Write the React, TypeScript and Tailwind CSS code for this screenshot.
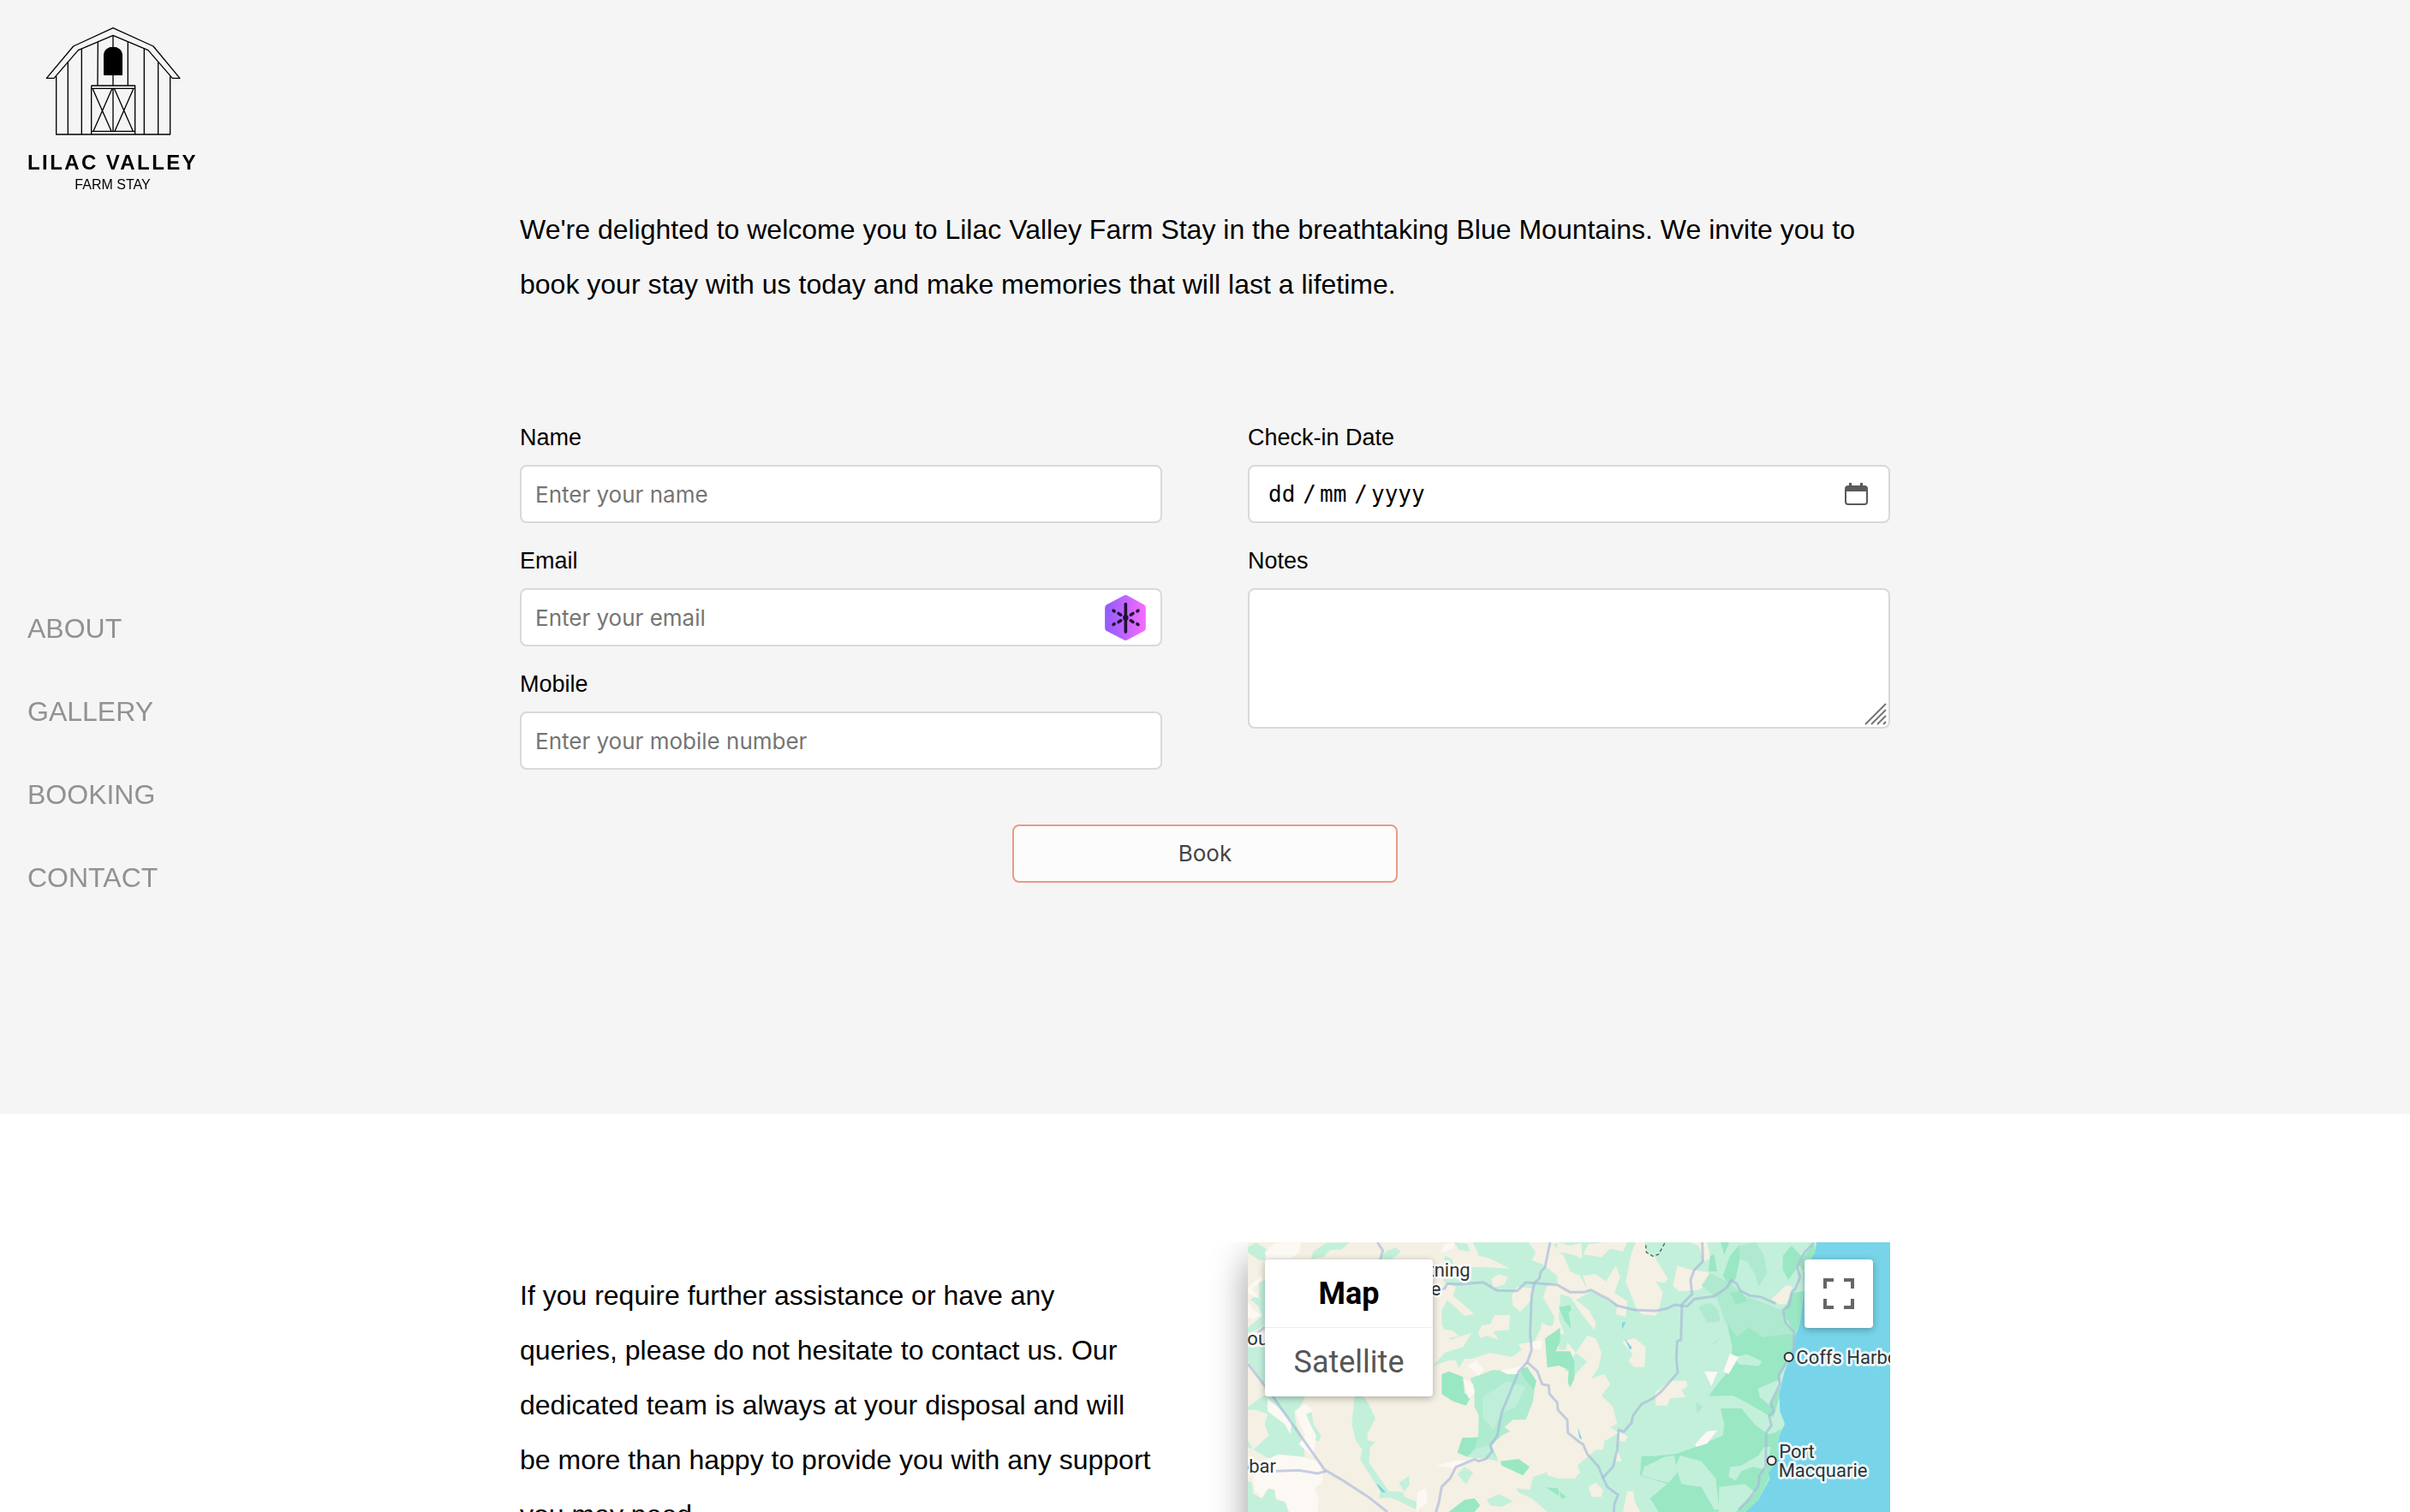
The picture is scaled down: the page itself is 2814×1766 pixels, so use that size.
import React from "react";

const FIELD = "h-[68px] w-full rounded-lg border-2 border-[#d9d9d9] bg-white text-black outline-none";

function Barn() {
  return (
    <svg viewBox="156 90 480 390" className="h-[130px] w-[160px]" fill="none" stroke="#000" strokeWidth="4" strokeLinejoin="round" aria-hidden="true">
      <path d="M163 274 257 162 396 98 537 162 630 274H604L519 176 396 124 274 176 189 274Z" />
      <path d="M197 266V471H596V266M238 217V471M286 171V471M505 171V471M554 217V471M343 147 342 300M448 147V300M396 124V170M396 260V300" />
      <path d="M320 300H473V471M320 300V471M320 310H473M320 460H473M396 310V460M324 310 390 460M393 310 327 460M400 310 466 460M468 310 402 460" />
      <path d="M365 262V195C365 175 380 166 396 166S427 175 427 195V262Z" fill="#000" />
    </svg>
  );
}

function HexBadge() {
  return (
    <svg viewBox="84 98 150 166" className="h-[55px] w-[50px]" aria-hidden="true">
      <defs>
        <linearGradient id="hex" x1="0" x2="1" y1="0" y2="0">
          <stop offset="0" stopColor="#8f5cff" />
          <stop offset="1" stopColor="#f76cff" />
        </linearGradient>
      </defs>
      <path d="M153 103Q160 99 167 103L225 135Q231 139 231 146V217Q231 224 225 228L167 259Q160 263 153 259L93 228Q87 224 87 217V146Q87 139 93 135Z" fill="url(#hex)" />
      <g stroke="#1f1235" strokeWidth="11" strokeLinecap="round">
        <path d="M160 133V231M117 156 120 158M135 166 143 171M178 191 186 196M201 203 204 205M204 156 201 158M186 166 178 171M143 191 135 196M120 203 117 205" />
      </g>
      <circle cx="160" cy="181" r="10" fill="#1f1235" />
    </svg>
  );
}

function CalendarIcon() {
  return (
    <svg viewBox="0 0 27 26" className="h-[26px] w-[27px]" aria-hidden="true">
      <path fillRule="evenodd" fill="#5a5a5a" d="M5 0H8V3H18V0H21V3H23Q27 3 27 7V22Q27 26 23 26H4Q0 26 0 22V7Q0 3 4 3H5ZM2 10V22Q2 24 4 24H23Q25 24 25 22V10Z" />
    </svg>
  );
}

const LIGHT_WEST = [
  "111,80 140,65 175,85 171,125 150,125 111,98",
  "333,122 340,95 385,65 468,63 440,88 400,90 375,115",
  "570,122 598,92 630,82 648,95 615,122",
  "150,205 171,195 171,350 140,372 111,380 111,362 160,322 150,290 120,262 150,250",
  "111,430 171,430 171,565 111,478",
  "111,640 165,600 312,603 300,630 275,660 280,700 300,750 312,815 215,805 210,835 130,790 111,780 111,755 130,790 185,740 170,700 180,665 140,650 111,650",
  "318,652 335,655 340,700 368,740 360,760 345,755 330,710 315,690",
  "485,603 515,603 535,630 558,680 530,735 530,757 558,762 540,780 535,835 605,935 660,938 640,905 675,882 678,912 655,940 660,955 708,975 700,1000 640,970 610,958 570,960 575,935 540,880 505,825 512,790 490,760 475,700 480,650",
  "111,900 125,905 130,945 160,960 185,925 205,930 210,965 250,975 255,1008 111,1008",
  "835,63 880,68 890,95 850,90",
  "900,63 1095,63 1120,100 1105,125 1145,140 1200,185 1198,205 1160,215 1145,255 1185,325 1180,355 1140,360 1115,410 1060,420 1070,440 1035,465 960,450 900,470 870,472 850,505 840,478 820,475 760,497 800,450 865,430 895,380 820,405 790,350 790,300 810,265 870,320 905,315 830,250 840,220 795,200 800,110 825,120 835,150 935,150 1030,155 960,120 920,110",
  "845,875 870,850 900,870 875,912",
  "948,965 990,945 1040,970 1000,990 960,985",
  "1050,925 1100,930 1110,885 1160,868 1260,900 1260,1008 1160,1008 1105,960 1060,940",
  "1180,70 1210,63 1260,90 1215,85 1220,120 1200,95",
];

const MID_WEST = [
  "890,540 970,510 1060,515 1085,500 1120,545 1110,620 1085,685 1040,685 1010,710 1030,725 1000,740 965,775 985,820 945,818 850,800 865,750 918,745 920,670 905,640 905,580",
];

const INNER_WEST = ["935,605 1020,550 1085,570 1050,640 1000,660 972,720 935,680", "905,790 960,770 968,800 990,830 945,822 880,815"];

const CREAM_WEST = [
  "965,190 990,175 1022,185 1010,210 970,222",
  "1035,250 1055,218 1110,225 1100,270 1065,307 1040,285",
  "918,380 930,355 960,350 975,318 1030,318 1025,370 970,375 990,405 950,390 925,398",
  "800,370 830,372 850,392 815,398",
];

const DARK_WEST = [
  "790,525 815,515 865,535 870,590 890,610 875,635 830,620 790,595",
  "862,748 918,748 905,785 880,815 845,800",
  "1065,508 1090,500 1122,550 1112,580 1080,540",
  "995,830 1060,822 1098,850 1075,880 1000,845",
  "815,1008 870,965 905,960 925,985 905,1008",
  "1155,922 1195,925 1228,955 1215,962",
];

const DARK_SEAM = [
  "1200,290 1240,283 1245,300 1235,310 1243,367 1222,340",
  "1152,400 1205,362 1205,410 1190,445 1240,445 1255,480 1255,540 1240,572 1232,555 1235,510 1200,495 1160,502",
  "1200,935 1228,955 1210,962",
];

const PALE_WEST = [
  "170,100 205,65 298,63 290,100 260,120 180,120",
  "111,222 160,178 162,195 125,225 155,262 111,240",
  "111,270 130,300 160,318 130,332 111,325",
  "180,610 215,640 265,690 260,735 240,700 180,655",
  "275,655 315,628 340,655 315,665 330,700 350,740 340,815 290,770 312,740",
  "130,890 150,835 215,808 300,815 355,830 375,870 370,905 345,925 360,960 355,1008 255,1008 240,970 210,960 205,930 180,925 160,960 135,930",
  "880,495 910,478 938,510 920,530",
  "995,512 1050,502 1080,490 1060,525 1020,525",
  "865,540 900,560 905,590 885,612",
  "768,845 850,825 875,830 830,855",
  "700,1008 705,940 735,925 740,975",
  "785,100 800,70 835,63 830,85",
  "1110,410 1152,405 1150,440 1105,435",
];

const CREAM_EAST = [
  "-5,63 40,75 80,65 82,120 60,110 25,100 -5,100",
  "-5,110 15,105 40,165 75,180 105,240 60,265 105,300 130,345 125,370 85,320 40,255 -5,240",
  "85,105 105,70 160,63 240,63 225,95 180,85 150,115",
  "85,180 130,175 165,200 200,145 215,185 195,240 240,270 235,325 200,315 205,280 140,250 100,230",
  "270,63 300,63 310,105 335,112 382,190 372,205 340,200 365,240 350,300 340,320 290,315 270,290 235,200 255,100",
  "400,215 415,145 460,158 525,168 530,205 490,230 420,235",
  "460,63 520,63 532,120 510,130 490,75",
  "745,262 795,215 818,215 805,280 770,280",
  "222,412 265,398 305,430 300,500 265,500 245,480 260,455",
  "-60,520 -60,345 -5,370 60,450 100,390 130,400 150,450 140,500 115,540 160,525 180,560 150,600 190,640 205,700 180,710 210,730 160,760 155,790 130,790 65,845 75,870 55,890 0,890 -40,880",
  "337,590 390,548 448,548 450,570 430,580 445,605 390,610 380,635 340,635",
  "210,725 243,745 230,762 210,760",
  "105,920 130,905 155,930 150,955 115,955",
  "225,1008 240,935 262,935 265,970 285,1008",
  "200,780 222,830 200,830",
];

const GREEN_OVER_CREAM = [
  "0,380 35,390 25,440 0,440",
  "60,450 100,480 55,530 20,510",
  "65,850 140,795 155,850 100,870",
];

const MID_EAST = [
  "490,290 530,275 560,300 565,340 520,345",
  "530,170 600,205 650,250 730,280 780,300 800,350 828,375 800,395 715,395 665,360 625,395 585,345 555,260 500,215",
  "625,75 690,63 720,110 730,170 700,220 690,180 660,130 635,120",
  "480,620 505,640 485,665",
  "530,420 570,398 550,415",
];

const DARK_EAST = [
  "590,350 625,395 665,360 715,395 800,385 828,385 828,430 800,485 775,530 775,600 752,675 700,665 640,615 610,600 525,602 560,555 605,500 608,430",
  "815,240 858,235 845,350 828,380 785,310",
  "893,65 903,100 860,165 840,140",
  "567,645 640,640 680,690 730,735 760,730 790,700 768,745 765,830 700,965 655,1008 350,1008 320,960 380,910 285,880 290,812 330,812 410,805 480,780 575,740 580,700",
  "600,110 630,75 635,120 620,190 600,215 575,180",
  "567,63 597,63 580,108",
  "530,110 545,105 555,165 525,165",
  "785,110 815,75 850,110 830,160 805,195 785,160",
  "600,240 640,235 660,270 620,280",
];

const LIGHT_EAST = [
  "570,645 600,605 650,620 745,675 790,680 788,715 735,735 690,705 640,645",
  "595,885 600,850 640,845 700,810 720,780 742,780 728,860 680,850 640,865 620,898",
  "290,880 300,850 370,815 405,810 415,870 385,905 360,900",
  "425,810 500,830 550,890 562,1000 545,1000 500,920 430,910 410,850",
  "562,920 650,910 690,940 620,1008 560,1008",
  "698,575 770,545 775,570 740,635 705,605",
  "615,465 660,455 712,480 700,497 630,490",
];

const PALE_EAST = ["600,453 630,465 610,500 595,525 577,515", "510,515 557,517 535,567", "478,770 520,725 555,722 520,768 482,780"];

const PONDS_EAST = ["222,345 235,342 222,368", "230,400 257,432 250,440", "67,710 82,755 72,748"];

const ROADS_WEST = [
  "565,63 584,92 575,122",
  "145,380 171,360",
  "111,488 200,605 380,860 440,895 530,953 600,1008",
  "210,865 290,862 355,873 385,865",
  "1170,63 1152,150 1138,165 1132,190 1115,205 1105,250 1100,385 1105,440 1090,483 1060,515 1000,660 985,740 960,775 967,795 945,822 920,830 905,823 870,838 840,850 820,890 790,920 780,975 770,1008",
  "759,235 800,225 810,208 850,210 935,203 985,232 1055,233 1085,203 1195,212 1240,238 1290,238 1312,230 1350,250 1375,262 1405,285 1465,300 1540,303 1580,295 1605,282 1650,287 1675,262 1745,252 1770,235 1790,220 1805,195 1825,210 1835,232 1870,250 1910,255 1960,278",
  "1090,483 1125,515 1142,560 1165,565 1168,595 1195,625 1197,650 1230,685 1232,730 1275,765 1285,770 1300,805 1340,850 1355,888 1370,920 1408,948 1395,980 1393,1008",
];

const ROADS_EAST = [
  "503,63 505,130 475,160 462,195 467,245 432,280 428,405 415,410 412,470 417,520 355,590 330,610 290,630 260,670 255,695 228,727 210,720 205,790 190,850 155,888",
  "893,65 860,100 835,150 845,185 830,225 815,240 808,285 785,300 795,345 825,378 823,435 800,480 770,530 775,560 742,628 755,655 737,670 745,705 727,730 725,850 703,880 700,915 665,965 630,1000",
];

function Shapes({ list, fill }: { list: string[]; fill: string }) {
  return (
    <g fill={fill}>
      {list.map((points) => (
        <polygon key={points} points={points} />
      ))}
    </g>
  );
}

function Roads({ list }: { list: string[] }) {
  return (
    <g fill="none" stroke="#a6b8d8" strokeOpacity="0.65" strokeWidth="9" strokeLinejoin="round">
      {list.map((points) => (
        <polyline key={points} points={points} />
      ))}
    </g>
  );
}

function CoastMap() {
  return (
    <svg viewBox="111 63 2250 1200" preserveAspectRatio="xMinYMin slice" className="block h-[400px] w-full" role="img" aria-label="Map of northern New South Wales">
      <rect x="111" y="63" width="2250" height="1200" fill="#f5f0e4" />
      <Shapes list={LIGHT_WEST} fill="#c3f0db" />
      <Shapes list={CREAM_WEST} fill="#f5f0e4" />
      <Shapes list={MID_WEST} fill="#afebd0" />
      <Shapes list={INNER_WEST} fill="#bfefda" />
      <Shapes list={DARK_WEST} fill="#9ae7c4" />
      <Shapes list={PALE_WEST} fill="#fcf8f3" />
      <polygon points="560,908 572,915 595,940 580,938" fill="#78d4e9" />
      <g transform="translate(1200 0)">
        <polygon points="20,63 1161,63 1161,1263 0,1263 0,890 60,890 0,560 60,500 0,330" fill="#c3f0db" />
        <Shapes list={CREAM_EAST} fill="#f5f0e4" />
        <Shapes list={GREEN_OVER_CREAM} fill="#c3f0db" />
        <Shapes list={MID_EAST} fill="#afe9d0" />
        <Shapes list={DARK_EAST} fill="#9ae7c4" />
        <Shapes list={LIGHT_EAST} fill="#c3f0db" />
        <Shapes list={PALE_EAST} fill="#fcf8f3" />
        <Shapes list={PONDS_EAST} fill="#78d4e9" />
        <polygon points="903,63 1161,63 1161,1263 600,1263 655,1008 700,965 740,890 735,870 765,830 770,745 792,700 785,680 775,655 773,590 790,520 805,480 825,430 830,385 845,350 860,230 858,170 880,130 898,100" fill="#78d4e9" />
        <polyline points="305,73 307,98 330,112 350,105 373,63" fill="none" stroke="#555b60" strokeWidth="4" strokeDasharray="12 9" />
      </g>
      <Shapes list={DARK_SEAM} fill="#9ae7c4" />
      <Roads list={ROADS_WEST} />
      <g transform="translate(1200 0)">
        <Roads list={ROADS_EAST} />
      </g>
      <g fontFamily="Roboto, sans-serif" fontSize="66" fill="#2f3338" stroke="#fff" strokeOpacity="0.85" strokeWidth="16" strokeLinejoin="round" style={{ paintOrder: "stroke" }}>
        <g textAnchor="end">
          <text x="890" y="183">Lightning</text>
          <text x="787" y="248">Ridge</text>
          <text x="210" y="870">Cobar</text>
        </g>
        <text x="68" y="423">Bourke</text>
        <text x="2032" y="488">Coffs Harbour</text>
        <text x="1972" y="820">Port</text>
        <text x="1970" y="885">Macquarie</text>
      </g>
      <g fill="#faf5ef" stroke="#2f3338" strokeWidth="6">
        <circle cx="2006" cy="465" r="15" />
        <circle cx="1946" cy="828" r="15" />
      </g>
    </svg>
  );
}

function TextField({ id, label, type, placeholder }: { id: string; label: string; type: string; placeholder: string }) {
  return (
    <div className="flex flex-col gap-4">
      <label htmlFor={id} className="text-[27px] leading-8">{label}</label>
      <div className="relative">
        <input id={id} type={type} placeholder={placeholder} className={FIELD + " block px-4 font-[Inter,sans-serif] text-[26px] placeholder:text-[#757575]"} />
        {id === "email" && (
          <div className="absolute inset-y-0 right-[18px] flex items-center">
            <HexBadge />
          </div>
        )}
      </div>
    </div>
  );
}

export default function App() {
  return (
    <div className="h-screen overflow-hidden bg-white font-['Liberation_Sans',Arial,sans-serif] text-[32px] leading-[64px] text-black">
      <aside className="fixed inset-y-0 left-0 z-10 flex w-[260px] flex-col justify-center pb-2 pl-8">
        <a href="#home" className="absolute left-8 top-[30px] flex flex-col items-center whitespace-nowrap">
          <Barn />
          <span className="mt-4 text-[24px] font-bold leading-7 tracking-widest">LILAC VALLEY</span>
          <span className="text-[16px] leading-6">FARM STAY</span>
        </a>
        <nav className="flex flex-col gap-[33px] text-[#929292]">
          <a href="#about">ABOUT</a>
          <a href="#gallery">GALLERY</a>
          <a href="#booking">BOOKING</a>
          <a href="#contact">CONTACT</a>
        </nav>
      </aside>

      <section id="booking" className="bg-[#f5f5f5] pb-[270px] pt-[236px]">
        <div className="mx-auto max-w-[1600px]">
          <p>
            We're delighted to welcome you to Lilac Valley Farm Stay in the breathtaking Blue Mountains. We invite you to book your stay with us today and make memories that will last a lifetime.
          </p>
          <form className="mt-[131px] flex flex-col items-center gap-16">
            <div className="grid w-full grid-cols-2 gap-x-[100px]">
              <div className="flex flex-col gap-7">
                <TextField id="name" label="Name" type="text" placeholder="Enter your name" />
                <TextField id="email" label="Email" type="email" placeholder="Enter your email" />
                <TextField id="mobile" label="Mobile" type="tel" placeholder="Enter your mobile number" />
              </div>
              <div className="flex flex-col gap-7">
                <div className="flex flex-col gap-4">
                  <label htmlFor="day" className="text-[27px] leading-8">Check-in Date</label>
                  <div role="group" aria-label="Check-in Date" className={FIELD + " flex items-center pl-[22px] pr-6 font-['DejaVu_Sans_Mono',monospace] text-[26px]"}>
                    <input id="day" aria-label="Day" placeholder="dd" className="w-9 outline-none placeholder:text-black" />
                    <span className="w-6 text-center">/</span>
                    <input aria-label="Month" placeholder="mm" className="w-9 outline-none placeholder:text-black" />
                    <span className="w-6 text-center">/</span>
                    <input aria-label="Year" placeholder="yyyy" className="w-20 outline-none placeholder:text-black" />
                    <button type="button" aria-label="Choose a date" className="ml-auto">
                      <CalendarIcon />
                    </button>
                  </div>
                </div>
                <div className="flex flex-col gap-4">
                  <label htmlFor="notes" className="text-[27px] leading-8">Notes</label>
                  <div className="relative">
                    <textarea id="notes" className="block h-[164px] w-full resize-none rounded-lg border-2 border-[#d9d9d9] bg-white px-4 py-2 text-[26px] leading-8 outline-none" />
                    <svg viewBox="0 0 26 26" className="absolute bottom-1 right-1 size-[26px]" stroke="#757575" strokeWidth="2" aria-hidden="true">
                      <path d="M1 25 25 1M8 25 25 8M15 25 25 15M22 25 25 22" />
                    </svg>
                  </div>
                </div>
              </div>
            </div>
            <button type="submit" className="h-[68px] w-[450px] rounded-lg border-2 border-[#e99a89] bg-[#fcfcfc] font-[Inter,sans-serif] text-[26px] leading-8 text-[#444]">
              Book
            </button>
          </form>
        </div>
      </section>

      <section id="contact" className="pt-[150px]">
        <div className="mx-auto grid max-w-[1600px] grid-cols-2 gap-x-[100px]">
          <p className="whitespace-nowrap pt-[30px]">
            If you require further assistance or have any
            <br />
            queries, please do not hesitate to contact us. Our
            <br />
            dedicated team is always at your disposal and will
            <br />
            be more than happy to provide you with any support
            <br />
            you may need.
          </p>
          <div className="[clip-path:inset(0_0_0_-60px)]">
            <div className="relative overflow-hidden shadow-[0_20px_40px_rgba(0,0,0,0.4)]">
              <CoastMap />
              <div className="absolute left-5 top-5 flex w-[196px] flex-col rounded-sm bg-white font-[Roboto,sans-serif] text-[36px] leading-[80px] shadow-[0_2px_8px_rgba(0,0,0,0.3)]">
                <button type="button" className="h-20 border-b border-[#eee] font-bold">Map</button>
                <button type="button" className="h-20 text-[#565656]">Satellite</button>
              </div>
              <button type="button" aria-label="Toggle fullscreen view" className="absolute right-5 top-5 flex size-20 items-center justify-center rounded-sm bg-white shadow-[0_2px_8px_rgba(0,0,0,0.3)]">
                <svg viewBox="0 0 36 36" className="size-9" fill="#666" aria-hidden="true">
                  <path d="M0 0H12V4H4V12H0ZM24 0H36V12H32V4H24ZM0 24H4V32H12V36H0ZM32 24H36V36H24V32H32Z" />
                </svg>
              </button>
            </div>
          </div>
        </div>
      </section>
    </div>
  );
}
